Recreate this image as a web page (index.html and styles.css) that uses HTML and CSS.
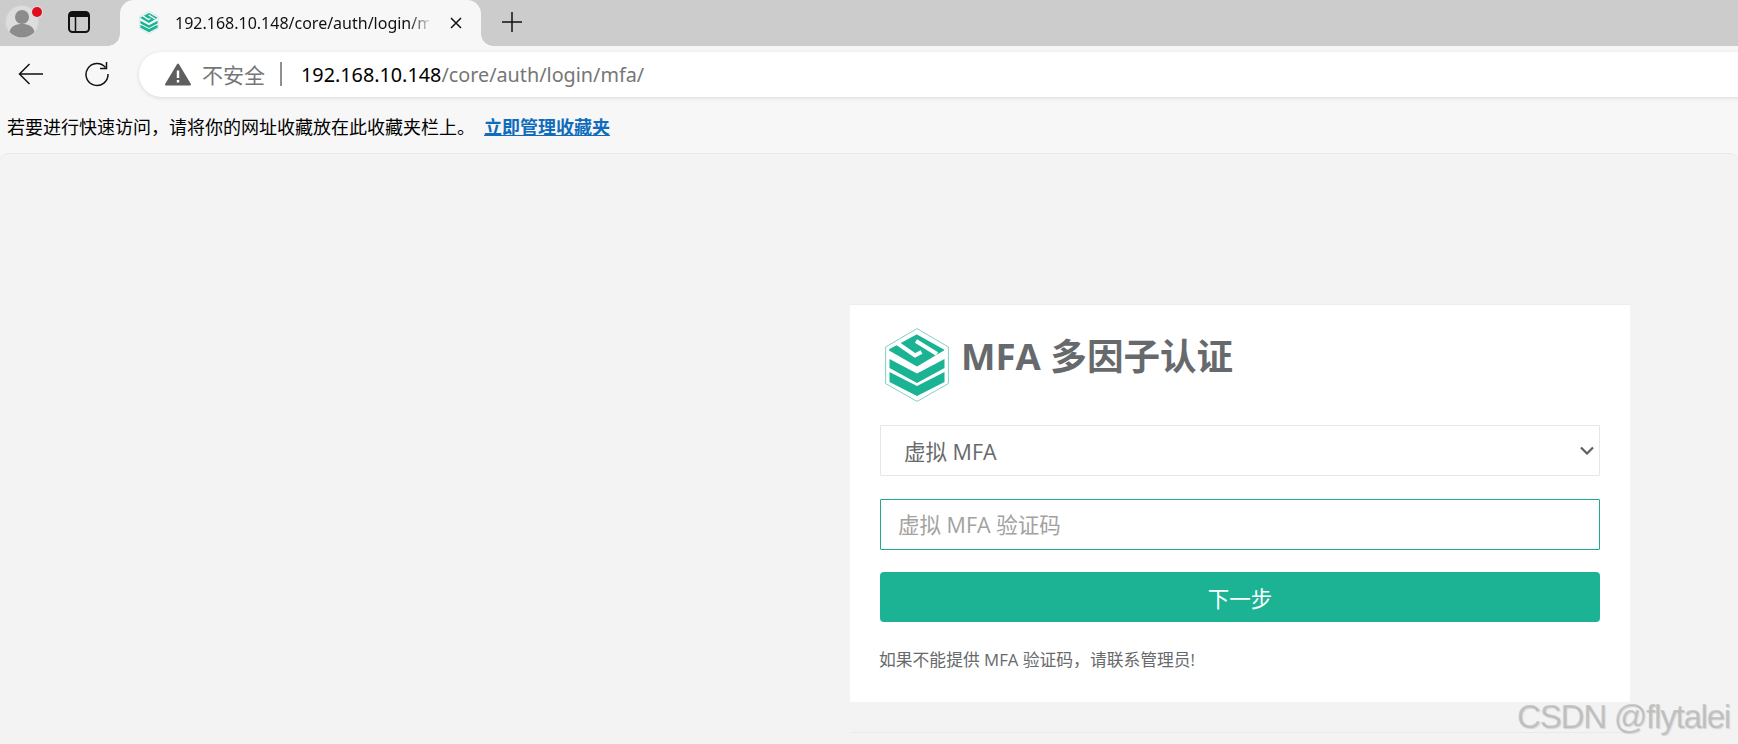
FILE: index.html
```html
<!DOCTYPE html>
<html lang="zh-CN">
<head>
<meta charset="utf-8">
<title>MFA 多因子认证</title>
<link rel="stylesheet" href="styles.css">
</head>
<body>
<svg class="defs" width="0" height="0" aria-hidden="true">
  <symbol id="logo" viewBox="0 0 64 74">
    <path d="M32 .6 63.4 19v36.5L32 73.4.6 55.5V19Z" fill="none" stroke="#7fd3c2" stroke-width="1"/>
    <path d="M32 7.5 58 22 32 37.500 5 22Z" fill="#1ab394" stroke="#1ab394" stroke-width="2" stroke-linejoin="round"/>
    <path d="M12 15 30 27.500 36.500 24" fill="none" stroke="#fff" stroke-width="4"/>
    <path d="M31 13 52 26" fill="none" stroke="#fff" stroke-width="4"/>
    <path d="M4.500 31 32 45.500 59.500 31V40L32 55 4.500 40Z" fill="#1ab394"/>
    <path d="M4.500 44 32 58 59.500 44V54L32 68 4.500 54Z" fill="#1ab394"/>
  </symbol>
</svg>
<header class="chrome">
  <div class="tabstrip">
    <div class="avatar">
      <svg width="34" height="34" viewBox="0 0 34 34"><circle cx="17" cy="17" r="16.500" fill="#ddd" stroke="#d2d2d2"/><circle cx="17" cy="12" r="7" fill="#8c8c8c"/><path d="M4.500 27c1-5.500 6-8 12.500-8s11.500 2.500 12.500 8c-3 3.500-7.500 5.500-12.500 5.500S7.500 30.500 4.500 27Z" fill="#8c8c8c"/></svg>
      <span class="dot"></span>
    </div>
    <svg class="side" width="22" height="22" viewBox="0 0 22 22"><rect x="1" y="1" width="20" height="20" rx="3.500" fill="none" stroke="#111" stroke-width="2"/><path d="M1 4.500Q1 1 4.500 1h13Q21 1 21 4.500V6H1Z" fill="#111"/><path d="M7.500 6v15" stroke="#111" stroke-width="1.500"/></svg>
    <div class="tab">
      <svg class="favicon" width="20" height="23" viewBox="0 0 64 74"><use href="#logo"/></svg>
      <span class="tab-title">192.168.10.148/core/auth/login/m</span>
      <svg class="close" width="14" height="14" viewBox="0 0 14 14"><path d="M2 2l10 10M12 2 2 12" stroke="#111" stroke-width="1.500"/></svg>
    </div>
    <svg class="plus" width="20" height="20" viewBox="0 0 20 20"><path d="M10 0v20M0 10h20" stroke="#111" stroke-width="1.500"/></svg>
  </div>
  <div class="toolbar">
    <svg class="back" width="26" height="22" viewBox="0 0 26 22"><path d="M25 11H2M11.500 1 1.500 11l10 10" fill="none" stroke="#111" stroke-width="1.500"/></svg>
    <svg class="reload" width="26" height="26" viewBox="0 0 26 26"><path d="M21.500 6.500A11 11 0 1 0 24 13" fill="none" stroke="#111" stroke-width="1.500"/><path d="M22.500 1v6.500H16" fill="none" stroke="#111" stroke-width="1.500"/></svg>
    <div class="omnibox">
      <svg class="warn" width="26" height="23" viewBox="0 0 26 23"><path d="M13 1.500 25 21.500H1Z" fill="#5f5f5f" stroke="#5f5f5f" stroke-width="2" stroke-linejoin="round"/><path d="M13 7.500v7.500M13 17v2.500" stroke="#fff" stroke-width="2.400"/></svg>
      <span class="insecure">不安全</span>
      <span class="divider"></span>
      <span class="url"><span class="host">192.168.10.148</span>/core/auth/login/mfa/</span>
    </div>
  </div>
  <div class="favbar">
    <span>若要进行快速访问，请将你的网址收藏放在此收藏夹栏上。</span>
    <a class="favlink" href="#">立即管理收藏夹</a>
  </div>
</header>
<main class="page">
  <section class="card">
    <div class="card-head">
      <svg class="logo" width="64" height="74" viewBox="0 0 64 74"><use href="#logo"/></svg>
      <h1 class="title">MFA 多因子认证</h1>
    </div>
    <div class="select">
      <span>虚拟 MFA</span>
      <svg width="14" height="9" viewBox="0 0 14 9"><path d="M1 1.500 7 7.500l6-6" fill="none" stroke="#5f5f5f" stroke-width="2.200"/></svg>
    </div>
    <input class="code" type="text" placeholder="虚拟 MFA 验证码">
    <button class="next" type="button">下一步</button>
    <p class="help">如果不能提供 MFA 验证码，请联系管理员!</p>
  </section>
  <div class="foot-line"></div>
</main>
<div class="watermark">CSDN @flytalei</div>
</body>
</html>
```
FILE: styles.css
```css
* { box-sizing: border-box; }
html, body { height: 100%; }
body {
  margin: 0;
  overflow: hidden;
  background: #f7f7f7;
  font-family: "Open Sans", "Noto Sans CJK SC", sans-serif;
  color: #676a6c;
}
.defs { position: absolute; }
.chrome { background: #f7f7f7; }
.tabstrip {
  height: 46px;
  background: #cccccc;
  display: flex;
  align-items: center;
  font-family: "Noto Sans", "Noto Sans CJK SC", sans-serif;
}
.avatar { position: relative; width: 34px; height: 34px; margin-left: 5px; margin-top: -3px; }
.avatar svg { display: block; }
.dot {
  position: absolute;
  top: 2px;
  right: -3px;
  width: 10px;
  height: 10px;
  border-radius: 50%;
  background: #e00b1c;
  box-shadow: 0 0 0 1px #ddd;
}
.side { margin-left: 29px; margin-top: -3px; flex: none; }
.tab {
  position: relative;
  width: 361px;
  height: 46px;
  margin-left: 30px;
  background: #f7f7f7;
  border-radius: 14px 14px 0 0;
  display: flex;
  align-items: center;
  padding-left: 19px;
}
.tab::before, .tab::after {
  content: "";
  position: absolute;
  bottom: 0;
  width: 12px;
  height: 12px;
}
.tab::before { left: -12px; background: radial-gradient(circle at 0 0, transparent 11.500px, #f7f7f7 12px); }
.tab::after { right: -12px; background: radial-gradient(circle at 100% 0, transparent 11.500px, #f7f7f7 12px); }
.favicon { flex: none; margin-top: -1px; }
.tab-title {
  margin-left: 16px;
  width: 254px;
  flex: none;
  overflow: hidden;
  white-space: nowrap;
  font-size: 16px;
  color: #111;
  -webkit-mask-image: linear-gradient(90deg, #000 92%, rgba(0, 0, 0, .15));
  mask-image: linear-gradient(90deg, #000 92%, rgba(0, 0, 0, .15));
}
.close { margin-left: 20px; flex: none; }
.plus { margin-left: 21px; flex: none; margin-top: -2px; }
.toolbar {
  height: 56px;
  display: flex;
  align-items: center;
  font-family: "Noto Sans", "Noto Sans CJK SC", sans-serif;
}
.back { margin-left: 18px; flex: none; }
.reload { margin-left: 40px; flex: none; }
.omnibox {
  flex: 1;
  height: 45px;
  margin-left: 29px;
  margin-right: -40px;
  background: #fff;
  border-radius: 23px;
  box-shadow: 0 1px 4px rgba(0, 0, 0, .12);
  display: flex;
  align-items: center;
  padding-left: 26px;
}
.warn { flex: none; }
.insecure { margin-left: 11px; font-size: 21px; color: #767676; }
.divider { width: 2px; height: 24px; background: #8f8f8f; margin: 0 19px 0 15px; }
.url { font-size: 19.800px; color: #767676; white-space: nowrap; }
.host { color: #000; }
.favbar {
  height: 51px;
  padding: 0 0 4px 7px;
  display: flex;
  align-items: center;
  font-size: 18px;
  color: #000;
  font-family: "Noto Sans CJK SC", sans-serif;
}
.favlink { margin-left: 9px; color: #0f6cbd; font-weight: 700; text-decoration: underline; }
.page {
  height: 591px;
  background: #f3f3f3;
  border-top: 1px solid #e9e9e9;
  border-radius: 8px 8px 0 0;
  padding: 150px 108px 0 850px;
}
.card {
  height: 398px;
  background: #fff;
  border-top: 1px solid #eceded;
  padding: 23px 30px 0;
}
.card-head { display: flex; align-items: flex-start; height: 97px; padding-left: 5px; }
.logo { flex: none; }
.title {
  margin: 4px 0 0 12px;
  font-size: 36.600px;
  line-height: 48px;
  font-weight: 700;
  color: #676a6c;
  white-space: nowrap;
}
.select {
  height: 51px;
  border: 1px solid #e5e6e7;
  border-radius: 1px;
  padding: 0 5px 0 23px;
  display: flex;
  align-items: center;
  justify-content: space-between;
  font-size: 21.500px;
}
.code {
  display: block;
  width: 100%;
  height: 51px;
  margin-top: 23px;
  padding: 0 17px;
  border: 1px solid #1fa98d;
  border-radius: 1px;
  background: #fff;
  font: inherit;
  font-size: 21.500px;
  outline: none;
}
.code::placeholder { color: #a2a2a2; opacity: 1; }
.next {
  display: block;
  width: 100%;
  height: 50px;
  margin-top: 22px;
  border: 0;
  border-radius: 4px;
  background: #1cb394;
  color: #fff;
  font: inherit;
  font-size: 21.500px;
}
.help { margin: 26px 0 0 -1px; font-size: 16.800px; line-height: 24px; white-space: nowrap; }
.foot-line { height: 1px; margin-top: 30px; background: #e9ebeb; }
.watermark {
  position: absolute;
  right: 8px;
  bottom: 8px;
  font-family: "Liberation Sans", sans-serif;
  font-size: 33px;
  letter-spacing: -1.200px;
  color: rgba(175, 175, 175, .6);
  text-shadow: 1px 1px 1px rgba(120, 120, 120, .25);
}
```
